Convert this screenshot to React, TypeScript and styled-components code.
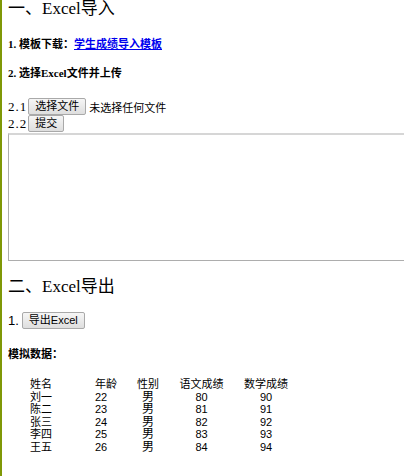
import styled, { createGlobalStyle } from "styled-components";

const GlobalStyle = createGlobalStyle`
  html, body {
    margin: 0;
    padding: 0;
    overflow: hidden;
    background: #fff;
  }
  body {
    font-family: "Liberation Serif", "Noto Sans CJK SC", serif;
    color: #000;
  }
`;

const rows = [
  { name: "刘一", age: 22, sex: "男", chinese: 80, math: 90 },
  { name: "陈二", age: 23, sex: "男", chinese: 81, math: 91 },
  { name: "张三", age: 24, sex: "男", chinese: 82, math: 92 },
  { name: "李四", age: 25, sex: "男", chinese: 83, math: 93 },
  { name: "王五", age: 26, sex: "男", chinese: 84, math: 94 },
];

const App = () => {
  return (
    <>
      <GlobalStyle />
      <StyledPage>
        <StyledHeading>一、Excel导入</StyledHeading>
        <StyledLabel $top={20}>
          1. 模板下载：<StyledLink href="#">学生成绩导入模板</StyledLink>
        </StyledLabel>
        <StyledLabel $top={17}>2. 选择Excel文件并上传</StyledLabel>

        <StyledRow $top={19}>
          <StyledStep>2.1</StyledStep>
          <StyledButton type="button">选择文件</StyledButton>
          <StyledHint>未选择任何文件</StyledHint>
        </StyledRow>
        <StyledRow $top={0}>
          <StyledStep>2.2</StyledStep>
          <StyledButton type="button">提交</StyledButton>
        </StyledRow>
        {/* 文本框比窗口宽，右侧被裁掉 */}
        <StyledTextarea />

        <StyledHeading $top={17}>二、Excel导出</StyledHeading>
        <StyledRow $top={16}>
          <StyledStep $sans>1.</StyledStep>
          <StyledButton type="button">导出Excel</StyledButton>
        </StyledRow>

        <StyledLabel $top={19}>模拟数据：</StyledLabel>

        <StyledTable>
          <StyledCell>姓名</StyledCell>
          <StyledCell>年龄</StyledCell>
          <StyledCell $center>性别</StyledCell>
          <StyledCell $center>语文成绩</StyledCell>
          <StyledCell $center>数学成绩</StyledCell>
          {rows.map((r) => [
            <StyledCell key={r.name + "n"}>{r.name}</StyledCell>,
            <StyledCell key={r.name + "a"}>{r.age}</StyledCell>,
            <StyledCell key={r.name + "s"} $center $big>{r.sex}</StyledCell>,
            <StyledCell key={r.name + "c"} $center>{r.chinese}</StyledCell>,
            <StyledCell key={r.name + "m"} $center>{r.math}</StyledCell>,
          ])}
        </StyledTable>
      </StyledPage>
    </>
  );
};

const StyledPage = styled.div`
  width: 100vw;
  min-height: 100vh;
  box-sizing: border-box;
  overflow: hidden;
  border-left: 2px solid #7f9806;
  padding-left: 6px;
  padding-bottom: 20px;
`;

const StyledHeading = styled.h3<{ $top?: number }>`
  margin: ${(p) => p.$top ?? 0}px 0 0;
  font-size: 17px;
  line-height: 18px;
  font-weight: normal;
  white-space: nowrap;
`;

const StyledLabel = styled.div<{ $top: number }>`
  margin-top: ${(p) => p.$top}px;
  font-size: 11px;
  line-height: 12px;
  font-weight: bold;
  white-space: nowrap;
`;

const StyledLink = styled.a`
  color: #0000ee;
  text-decoration: underline;
`;

const StyledRow = styled.div<{ $top: number }>`
  display: flex;
  align-items: center;
  margin-top: ${(p) => p.$top}px;
  height: 17px;
  white-space: nowrap;
`;

const StyledStep = styled.span<{ $sans?: boolean }>`
  font-family: ${(p) =>
    p.$sans ? `"Liberation Sans", sans-serif` : `"Liberation Serif", serif`};
  font-size: 13px;
  letter-spacing: ${(p) => (p.$sans ? "0" : "1px")};
  margin-right: ${(p) => (p.$sans ? "3px" : "1px")};
`;

const StyledButton = styled.button`
  height: 17px;
  padding: 0 6px;
  font-family: "Liberation Sans", "Noto Sans CJK SC", sans-serif;
  font-size: 11px;
  line-height: 15px;
  color: #000;
  background: linear-gradient(#f6f6f6, #dedede);
  border: 1px solid #a9a9a9;
  border-radius: 2px;
  cursor: pointer;
`;

const StyledHint = styled.span`
  margin-left: 3px;
  font-family: "Noto Sans CJK SC", sans-serif;
  font-size: 11px;
`;

const StyledTextarea = styled.textarea`
  display: block;
  box-sizing: border-box;
  margin: 1px 0 0;
  width: 520px;
  height: 128px;
  border: 1px solid #adadad;
  border-top: 2px solid #d6d6d6;
  resize: none;
  outline: none;
`;

const StyledTable = styled.div`
  display: grid;
  grid-template-columns: 65px 38px 30px 77px 52px;
  grid-auto-rows: 12.5px;
  margin: 18px 0 0 22px;
  font-family: "Liberation Sans", "Noto Sans CJK SC", sans-serif;
  font-size: 11px;
  line-height: 12.5px;
`;

const StyledCell = styled.div<{ $center?: boolean; $big?: boolean }>`
  text-align: ${(p) => (p.$center ? "center" : "left")};
  font-size: ${(p) => (p.$big ? "12px" : "11px")};
  white-space: nowrap;
`;

export default App;
